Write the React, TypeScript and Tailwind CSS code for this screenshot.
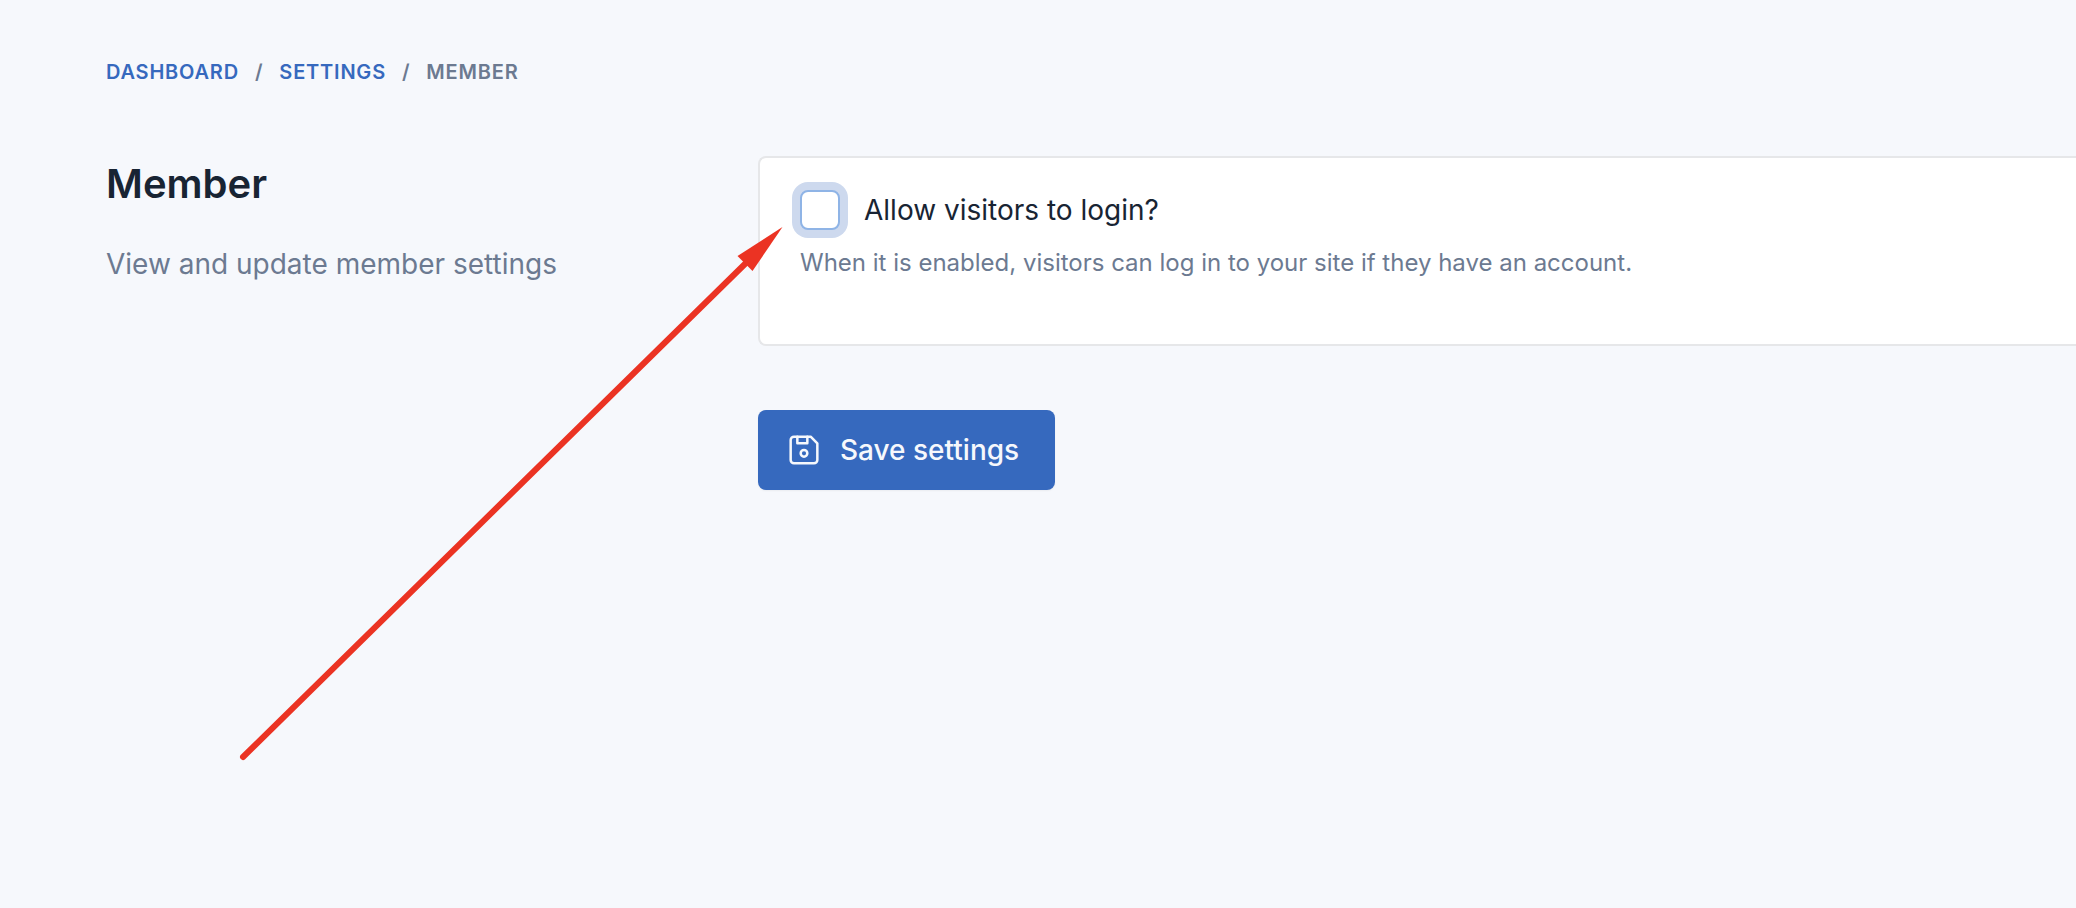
import { TbDeviceFloppy } from 'react-icons/tb'

function Breadcrumb() {
  return (
    <nav aria-label="Breadcrumb" className="text-xl leading-8 font-semibold tracking-[0.04em] text-[#6c7a91] uppercase">
      <ol className="flex gap-4">
        <li>
          <a href="#dashboard" className="text-[#3669be]">Dashboard</a>
        </li>
        <li aria-hidden="true">/</li>
        <li>
          <a href="#settings" className="text-[#3669be]">Settings</a>
        </li>
        <li aria-hidden="true">/</li>
        <li aria-current="page">Member</li>
      </ol>
    </nav>
  )
}

// Red arrow that points at the checkbox, drawn over the page
function PointerArrow() {
  return (
    <svg
      className="pointer-events-none absolute top-0 left-0"
      width="800"
      height="780"
      viewBox="0 0 800 780"
      aria-hidden="true"
    >
      <path d="M243 757 L748 261" stroke="#eb3323" strokeWidth="6" strokeLinecap="round" />
      <path d="M782.5 227 L737.5 256 L752.5 271 Z" fill="#eb3323" />
    </svg>
  )
}

export default function App() {
  return (
    <div className="relative min-h-screen overflow-hidden bg-[#f6f8fc] pt-14 pb-20 pl-[106px] font-[Inter,sans-serif] text-[#182433]">
      <Breadcrumb />

      <main className="mt-[68px] flex">
        {/* Section title */}
        <div className="w-[652px] shrink-0">
          <h1 className="pt-1 text-[40px] leading-[48px] font-semibold">Member</h1>
          <p className="mt-9 text-[28px] leading-10 text-[#6c7a91]">View and update member settings</p>
        </div>

        {/* Settings form */}
        <form className="min-w-0 grow">
          <div className="rounded-l-lg border-2 border-r-0 border-[#e6e7e9] bg-white px-10 pt-8 pb-16">
            <label htmlFor="allow-login" className="flex items-center gap-6 text-[28px] leading-10">
              <input
                id="allow-login"
                type="checkbox"
                aria-describedby="allow-login-help"
                className="size-10 shrink-0 appearance-none rounded-lg border-2 border-[#8fb4e6] bg-white ring-8 ring-[#cdd9ee]"
              />
              Allow visitors to login?
            </label>
            <p id="allow-login-help" className="mt-4 text-2xl leading-[34px] text-[#6c7a91]">
              When it is enabled, visitors can log in to your site if they have an account.
            </p>
          </div>

          <button
            type="button"
            className="mt-16 flex h-20 items-center gap-4 rounded-lg bg-[#3669be] pr-9 pl-[26px] text-[28px] leading-10 font-medium text-[#f6f8fc] shadow-xs"
          >
            <TbDeviceFloppy className="size-10" strokeWidth={1.5} />
            Save settings
          </button>
        </form>
      </main>

      <PointerArrow />
    </div>
  )
}
